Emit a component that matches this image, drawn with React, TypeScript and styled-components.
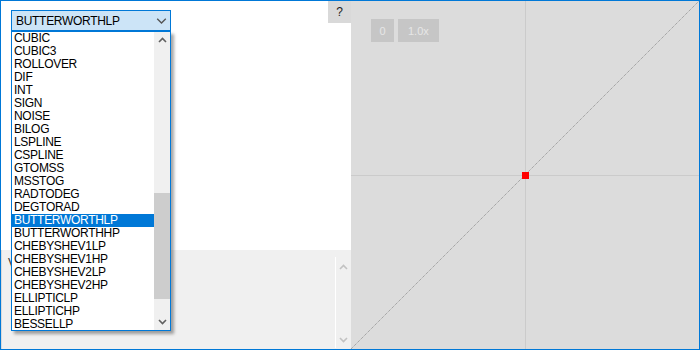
import styled, { createGlobalStyle } from "styled-components";

const Items = [
  "CUBIC", "CUBIC3", "ROLLOVER", "DIF", "INT", "SIGN", "NOISE", "BILOG",
  "LSPLINE", "CSPLINE", "GTOMSS", "MSSTOG", "RADTODEG", "DEGTORAD",
  "BUTTERWORTHLP", "BUTTERWORTHHP", "CHEBYSHEV1LP", "CHEBYSHEV1HP",
  "CHEBYSHEV2LP", "CHEBYSHEV2HP", "ELLIPTICLP", "ELLIPTICHP", "BESSELLP",
];

const Selected = "BUTTERWORTHLP";
const Chart_Size = 348;

const Global = createGlobalStyle`
  body {
    margin: 0;
    font-family: "Liberation Sans", Arial, sans-serif;
  }
`;

function Chevron({ up, color, size = 9, width = 1.6 }: { up?: boolean; color: string; size?: number; width?: number }) {
  const pts = up ? "1,6 4.5,2.5 8,6" : "1,3 4.5,6.5 8,3";
  return (
    <svg width={size} height={size} viewBox="0 0 9 9">
      <polyline points={pts} fill="none" stroke={color} strokeWidth={width} />
    </svg>
  );
}

export default function App() {
  const half = Chart_Size / 2;
  return (
    <>
      <Global />
      <Frame>
        <LeftPane>
          <TopArea>
            <SelectWrap>
              <SelectBox>
                <span>{Selected}</span>
                <Chevron color="#555" size={11} width={1.1} />
              </SelectBox>
              <ListBox>
                <ItemList>
                  {Items.map((item) => (
                    <Item key={item} selected={item === Selected}>{item}</Item>
                  ))}
                </ItemList>
                <ListScroll>
                  <ArrowCell><Chevron up color="#606060" /></ArrowCell>
                  <Track>
                    <Thumb />
                  </Track>
                  <ArrowCell><Chevron color="#606060" /></ArrowCell>
                </ListScroll>
              </ListBox>
            </SelectWrap>
            <HelpButton>?</HelpButton>
          </TopArea>
          <BottomArea>
            <Label>V</Label>
            <PaneScroll>
              <Chevron up color="#c2c2c2" />
              <Chevron color="#c2c2c2" />
            </PaneScroll>
          </BottomArea>
        </LeftPane>
        <ChartPane>
          <Toolbar>
            <ZoomButton>0</ZoomButton>
            <ZoomButton>1.0x</ZoomButton>
          </Toolbar>
          <ChartSvg width={Chart_Size} height={Chart_Size}>
            <line x1={half + 0.5} y1={0} x2={half + 0.5} y2={Chart_Size} stroke="#cbcbcb" />
            <line x1={0} y1={half + 0.5} x2={Chart_Size} y2={half + 0.5} stroke="#cbcbcb" />
            <line x1={0} y1={Chart_Size} x2={Chart_Size} y2={0} stroke="#8f8f8f" strokeDasharray="1 1" />
            <rect x={half - 3} y={half - 3} width={7} height={7} fill="#ff0000" />
          </ChartSvg>
        </ChartPane>
      </Frame>
    </>
  );
}

const Frame = styled.div`
  width: 700px;
  height: 350px;
  box-sizing: border-box;
  border: 1px solid #0078d7;
  display: flex;
  overflow: hidden;
`;

const LeftPane = styled.div`
  width: 350px;
  display: flex;
  flex-direction: column;
`;

const TopArea = styled.div`
  height: 249px;
  background: #fff;
  display: flex;
  justify-content: space-between;
  align-items: flex-start;
  padding: 9px 0 0 10px;
  box-sizing: border-box;
`;

const SelectWrap = styled.div`
  position: relative;
  z-index: 2;
`;

const SelectBox = styled.div`
  width: 160px;
  height: 21px;
  box-sizing: border-box;
  border: 1px solid #0078d7;
  background: #cce4f7;
  display: flex;
  align-items: center;
  justify-content: space-between;
  padding: 0 3px 0 4px;
  font-size: 12px;
  letter-spacing: -0.3px;
  color: #000;
`;

const ListBox = styled.div`
  position: absolute;
  top: 21px;
  left: 0;
  width: 160px;
  height: 300px;
  box-sizing: border-box;
  border: 1px solid #0078d7;
  background: #fff;
  display: flex;
  overflow: hidden;
  box-shadow: 3px 3px 3px rgba(0, 0, 0, 0.35);
`;

const ItemList = styled.div`
  flex: 1;
  display: flex;
  flex-direction: column;
`;

const Item = styled.div<{ selected?: boolean }>`
  height: 13px;
  line-height: 13px;
  flex-shrink: 0;
  padding-left: 2px;
  font-size: 12px;
  letter-spacing: -0.3px;
  background: ${(p) => (p.selected ? "#0078d7" : "transparent")};
  color: ${(p) => (p.selected ? "#fff" : "#000")};
  white-space: nowrap;
`;

const ListScroll = styled.div`
  width: 16px;
  background: #f0f0f0;
  display: flex;
  flex-direction: column;
`;

const ArrowCell = styled.div`
  height: 17px;
  display: flex;
  align-items: center;
  justify-content: center;
`;

const Track = styled.div`
  flex: 1;
  padding-top: 144px;
`;

const Thumb = styled.div`
  height: 106px;
  background: #cdcdcd;
`;

const HelpButton = styled.div`
  margin-top: -9px;
  width: 23px;
  height: 22px;
  background: #d9d9d9;
  display: flex;
  align-items: center;
  justify-content: center;
  font-size: 12px;
  color: #222;
`;

const BottomArea = styled.div`
  flex: 1;
  background: #f0f0f0;
  display: flex;
  justify-content: space-between;
  border-left: 1px solid #dadada;
`;

const Label = styled.div`
  padding: 6px 0 0 6px;
  font-size: 12px;
  color: #333;
`;

const PaneScroll = styled.div`
  width: 15px;
  margin-top: 7px;
  margin-bottom: 1px;
  border-left: 1px solid #fff;
  display: flex;
  flex-direction: column;
  justify-content: space-between;
  align-items: center;
  padding: 6px 0 4px;
`;

const ChartPane = styled.div`
  position: relative;
  width: 348px;
  height: 348px;
  background: #dcdcdc;
`;

const Toolbar = styled.div`
  position: relative;
  z-index: 1;
  display: flex;
  gap: 4px;
  padding: 18px 0 0 20px;
`;

const ZoomButton = styled.div`
  height: 23px;
  min-width: 23px;
  padding: 0 10px;
  box-sizing: border-box;
  background: #c6c6c6;
  color: #e6e6e6;
  font-size: 11px;
  display: flex;
  align-items: center;
  justify-content: center;
  &:first-child {
    padding: 0;
  }
`;

const ChartSvg = styled.svg`
  position: absolute;
  top: 0;
  left: 0;
`;
